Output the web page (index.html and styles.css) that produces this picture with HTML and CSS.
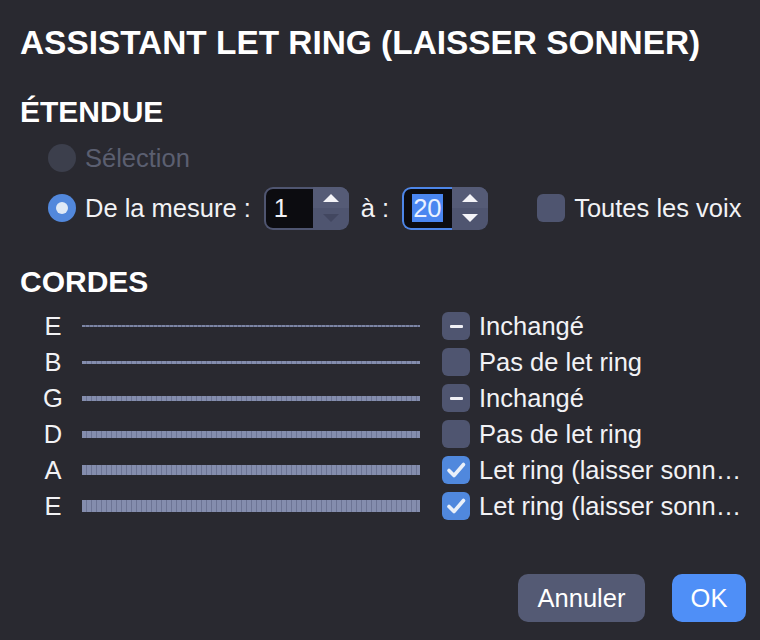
FILE: index.html
```html
<!DOCTYPE html>
<html lang="fr">
<head>
<meta charset="utf-8">
<title>Assistant Let Ring</title>
<link rel="stylesheet" href="styles.css">
</head>
<body>
<div class="dialog">
  <h1 class="title">ASSISTANT LET RING (LAISSER SONNER)</h1>

  <h2 class="section first">ÉTENDUE</h2>
  <div class="radio-row disabled">
    <span class="radio"></span>
    <span class="label">Sélection</span>
  </div>
  <div class="radio-row range">
    <span class="radio checked"></span>
    <span class="label">De la mesure :</span>
    <div class="spinner">
      <div class="field"><span>1</span></div>
      <div class="stepper">
        <span class="arrow up"></span>
        <span class="arrow down dim"></span>
      </div>
    </div>
    <span class="label sep">à :</span>
    <div class="spinner focused">
      <div class="field"><span class="sel">20</span></div>
      <div class="stepper">
        <span class="arrow up"></span>
        <span class="arrow down"></span>
      </div>
    </div>
    <span class="check voices"></span>
    <span class="label">Toutes les voix</span>
  </div>

  <h2 class="section second">CORDES</h2>
  <div class="strings">
    <div class="string-row">
      <span class="note">E</span>
      <span class="wire w1"></span>
      <span class="check mixed"></span>
      <span class="state">Inchangé</span>
    </div>
    <div class="string-row">
      <span class="note">B</span>
      <span class="wire w2"></span>
      <span class="check"></span>
      <span class="state">Pas de let ring</span>
    </div>
    <div class="string-row">
      <span class="note">G</span>
      <span class="wire w3"></span>
      <span class="check mixed"></span>
      <span class="state">Inchangé</span>
    </div>
    <div class="string-row">
      <span class="note">D</span>
      <span class="wire w4"></span>
      <span class="check"></span>
      <span class="state">Pas de let ring</span>
    </div>
    <div class="string-row">
      <span class="note">A</span>
      <span class="wire w5"></span>
      <span class="check on"><svg viewBox="0 0 28 28"><path d="M7 14.5 L12 19.5 L21.5 8.5" /></svg></span>
      <span class="state">Let ring (laisser sonner)</span>
    </div>
    <div class="string-row">
      <span class="note">E</span>
      <span class="wire w6"></span>
      <span class="check on"><svg viewBox="0 0 28 28"><path d="M7 14.5 L12 19.5 L21.5 8.5" /></svg></span>
      <span class="state">Let ring (laisser sonner)</span>
    </div>
  </div>

  <div class="buttons">
    <button class="btn cancel">Annuler</button>
    <button class="btn ok">OK</button>
  </div>
</div>
</body>
</html>
```

FILE: styles.css
```css
html, body {
  margin: 0;
  padding: 0;
  background: #292930;
}
body {
  width: 760px;
  height: 640px;
  overflow: hidden;
  font-family: "Liberation Sans", Arial, sans-serif;
  color: #f2f2f5;
}
.dialog {
  display: flex;
  flex-direction: column;
  padding: 21px 14px 0 20px;
}
.title {
  margin: 0;
  font-size: 33.4px;
  line-height: 44px;
  font-weight: bold;
  color: #ffffff;
  white-space: nowrap;
}
.section {
  margin: 0;
  font-size: 30px;
  line-height: 40px;
  font-weight: bold;
  color: #ffffff;
}
.section.first { margin-top: 27px; }
.section.second { margin-top: 32px; }

.radio-row {
  display: flex;
  align-items: center;
  height: 36px;
  padding-left: 28px;
  font-size: 25.5px;
  margin-top: 8px;
}
.radio-row.range {
  height: 44px;
  margin-top: 10px;
}
.radio {
  width: 28px;
  height: 28px;
  border-radius: 50%;
  background: #3c3f4c;
  margin-right: 9px;
  flex: none;
  display: flex;
  align-items: center;
  justify-content: center;
}
.radio.checked {
  background: #5288dc;
}
.radio.checked::after {
  content: "";
  width: 12px;
  height: 12px;
  border-radius: 50%;
  background: #dfe9f6;
}
.disabled .label { color: #5b5f70; }
.label { white-space: nowrap; }
.label.sep { margin: 0 13px 0 12px; }

.spinner {
  display: flex;
  height: 43px;
  margin-left: 13px;
  border-radius: 9px;
  overflow: hidden;
  background: #4f5570;
}
.spinner .field {
  margin: 2px 0 2px 2px;
  background: #0c0c10;
  border-radius: 7px 0 0 7px;
  display: flex;
  align-items: center;
  padding-left: 8px;
  box-sizing: border-box;
  width: 47px;
}
.spinner.focused {
  margin-left: 0;
}
.spinner.focused .field {
  margin: 0;
  width: 50px;
  border: 2px solid #4d86e8;
  border-right: none;
  border-radius: 9px 0 0 9px;
}
.sel {
  background: #4a86f0;
  color: #eaf1ff;
  line-height: 28px;
  padding: 0 1px;
}
.stepper {
  width: 36px;
  display: flex;
  flex-direction: column;
}
.arrow {
  flex: 1;
  display: flex;
  align-items: center;
  justify-content: center;
}
.arrow.up { background: #555b76; }
.arrow.up::after {
  content: "";
  border-left: 8px solid transparent;
  border-right: 8px solid transparent;
  border-bottom: 8px solid #f4f4f8;
  margin-top: 2px;
}
.arrow.down::after {
  content: "";
  border-left: 8px solid transparent;
  border-right: 8px solid transparent;
  border-top: 8px solid #f4f4f8;
  margin-bottom: 2px;
}
.arrow.down.dim::after { border-top-color: #424760; }

.check {
  width: 28px;
  height: 28px;
  border-radius: 6px;
  background: #4f5570;
  flex: none;
  display: flex;
  align-items: center;
  justify-content: center;
  box-sizing: border-box;
}
.check.voices {
  margin-left: 49px;
  margin-right: 9px;
}
.check.mixed::after {
  content: "";
  width: 13px;
  height: 3px;
  border-radius: 1px;
  background: #f0f0f5;
}
.check.on {
  background: #5088dd;
}
.check svg {
  width: 28px;
  height: 28px;
}
.check svg path {
  fill: none;
  stroke: #eaf0f9;
  stroke-width: 3.6;
  stroke-linecap: round;
  stroke-linejoin: round;
}

.strings {
  display: flex;
  flex-direction: column;
  margin-top: 6px;
}
.string-row {
  display: flex;
  align-items: center;
  height: 36px;
  font-size: 25.5px;
}
.note {
  width: 26px;
  margin-left: 20px;
  text-align: center;
  flex: none;
}
.wire {
  width: 338px;
  margin-left: 16px;
  margin-right: 22px;
  flex: none;
  background: repeating-linear-gradient(90deg, #848dad 0 4px, #6c7494 4px 5px);
}
.wire.w1 { height: 2px; background: repeating-linear-gradient(90deg, #7c85a4 0 3px, #5f6684 3px 4px); }
.wire.w2 { height: 3px; }
.wire.w3 { height: 5px; }
.wire.w4 { height: 7px; }
.wire.w5 { height: 10px; }
.wire.w6 { height: 12px; }
.state {
  margin-left: 9px;
  max-width: 265px;
  white-space: nowrap;
  overflow: hidden;
  text-overflow: ellipsis;
}

.buttons {
  display: flex;
  justify-content: flex-end;
  gap: 27px;
  margin-top: 50px;
}
.btn {
  height: 48px;
  border: none;
  border-radius: 10px;
  font-family: "Liberation Sans", Arial, sans-serif;
  font-size: 25.5px;
  color: #ffffff;
  padding: 0;
}
.btn.cancel {
  width: 127px;
  background: #545a74;
}
.btn.ok {
  width: 74px;
  background: #4f8ff7;
}
```
